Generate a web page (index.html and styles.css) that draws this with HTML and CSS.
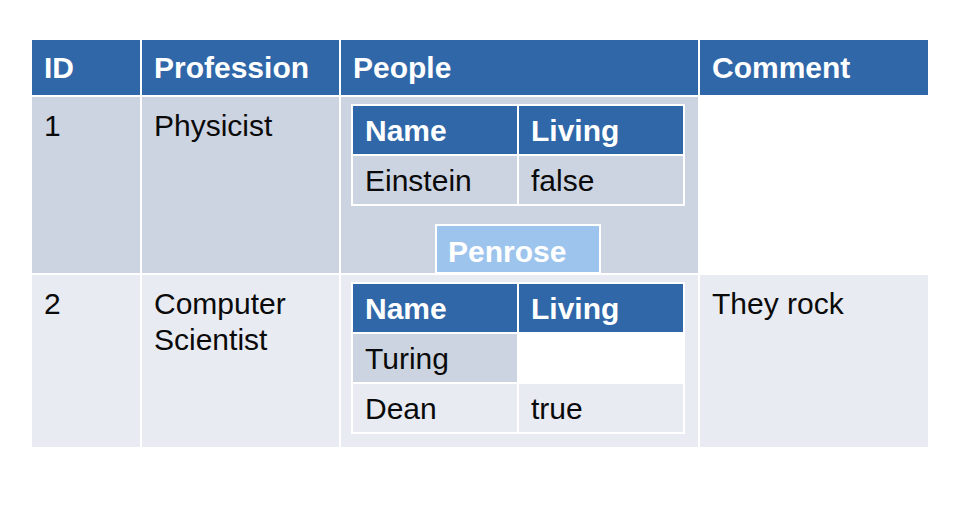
FILE: index.html
```html
<!DOCTYPE html>
<html>
<head>
<meta charset="utf-8">
<link rel="stylesheet" href="styles.css">
</head>
<body>
<table class="grid">
  <colgroup>
    <col class="c-id"><col class="c-prof"><col class="c-people"><col class="c-comment">
  </colgroup>
  <tr class="head">
    <th>ID</th><th>Profession</th><th>People</th><th>Comment</th>
  </tr>
  <tr class="r1">
    <td>1</td>
    <td>Physicist</td>
    <td class="people">
      <table class="inner">
        <colgroup><col class="ic"><col class="ic"></colgroup>
        <tr class="ihead"><th>Name</th><th>Living</th></tr>
        <tr><td class="dark">Einstein</td><td class="dark">false</td></tr>
      </table>
      <div class="penrose">Penrose</div>
    </td>
    <td class="blank"></td>
  </tr>
  <tr class="r2">
    <td>2</td>
    <td>Computer<br>Scientist</td>
    <td class="people">
      <table class="inner">
        <colgroup><col class="ic"><col class="ic"></colgroup>
        <tr class="ihead"><th>Name</th><th>Living</th></tr>
        <tr><td class="dark">Turing</td><td class="blank"></td></tr>
        <tr><td class="light">Dean</td><td class="light">true</td></tr>
      </table>
    </td>
    <td>They rock</td>
  </tr>
</table>
</body>
</html>
```
FILE: styles.css
```css
html, body {
  margin: 0;
  padding: 0;
  background: #ffffff;
}
body {
  font-family: "Liberation Sans", Arial, sans-serif;
  font-size: 30px;
  line-height: 36px;
  color: #0a0a0a;
}
.grid {
  border-collapse: separate;
  border-spacing: 2px;
  table-layout: fixed;
  margin: 38px 0 0 30px;
  width: 900px;
}
.c-id { width: 108px; }
.c-prof { width: 197px; }
.c-people { width: 357px; }
.c-comment { width: 228px; }

.grid th, .grid td {
  padding: 11px 12px 0 12px;
  text-align: left;
  vertical-align: top;
}
.grid .head th {
  background: #2f67a9;
  color: #ffffff;
  font-weight: bold;
  height: 55px;
  padding: 0 12px;
  vertical-align: middle;
}
.r1 { height: 176px; }
.r1 > td { background: #cdd4e1; }
.r2 { height: 172px; }
.r2 > td { background: #e8ebf2; }
.grid td.blank { background: #ffffff; }

.grid td.people {
  padding: 7px 0 0 10px;
}
.inner {
  border-collapse: separate;
  border-spacing: 2px;
  table-layout: fixed;
  background: #ffffff;
  width: 334px;
}
.ic { width: 164px; }
.inner th, .inner td {
  height: 46px;
  padding: 2px 12px 0 12px;
  vertical-align: middle;
  text-align: left;
}
.inner .ihead th {
  background: #2f67a9;
  color: #ffffff;
  font-weight: bold;
}
.inner td.dark { background: #cdd4e1; }
.inner td.light { background: #e8ebf2; }
.inner td.blank { background: #ffffff; }

.penrose {
  box-sizing: border-box;
  width: 166px;
  height: 50px;
  margin: 18px 0 -2px 84px;
  border: 2px solid #ffffff;
  background: #9dc4ed;
  color: #ffffff;
  font-weight: bold;
  padding: 8px 0 0 11px;
}
```
